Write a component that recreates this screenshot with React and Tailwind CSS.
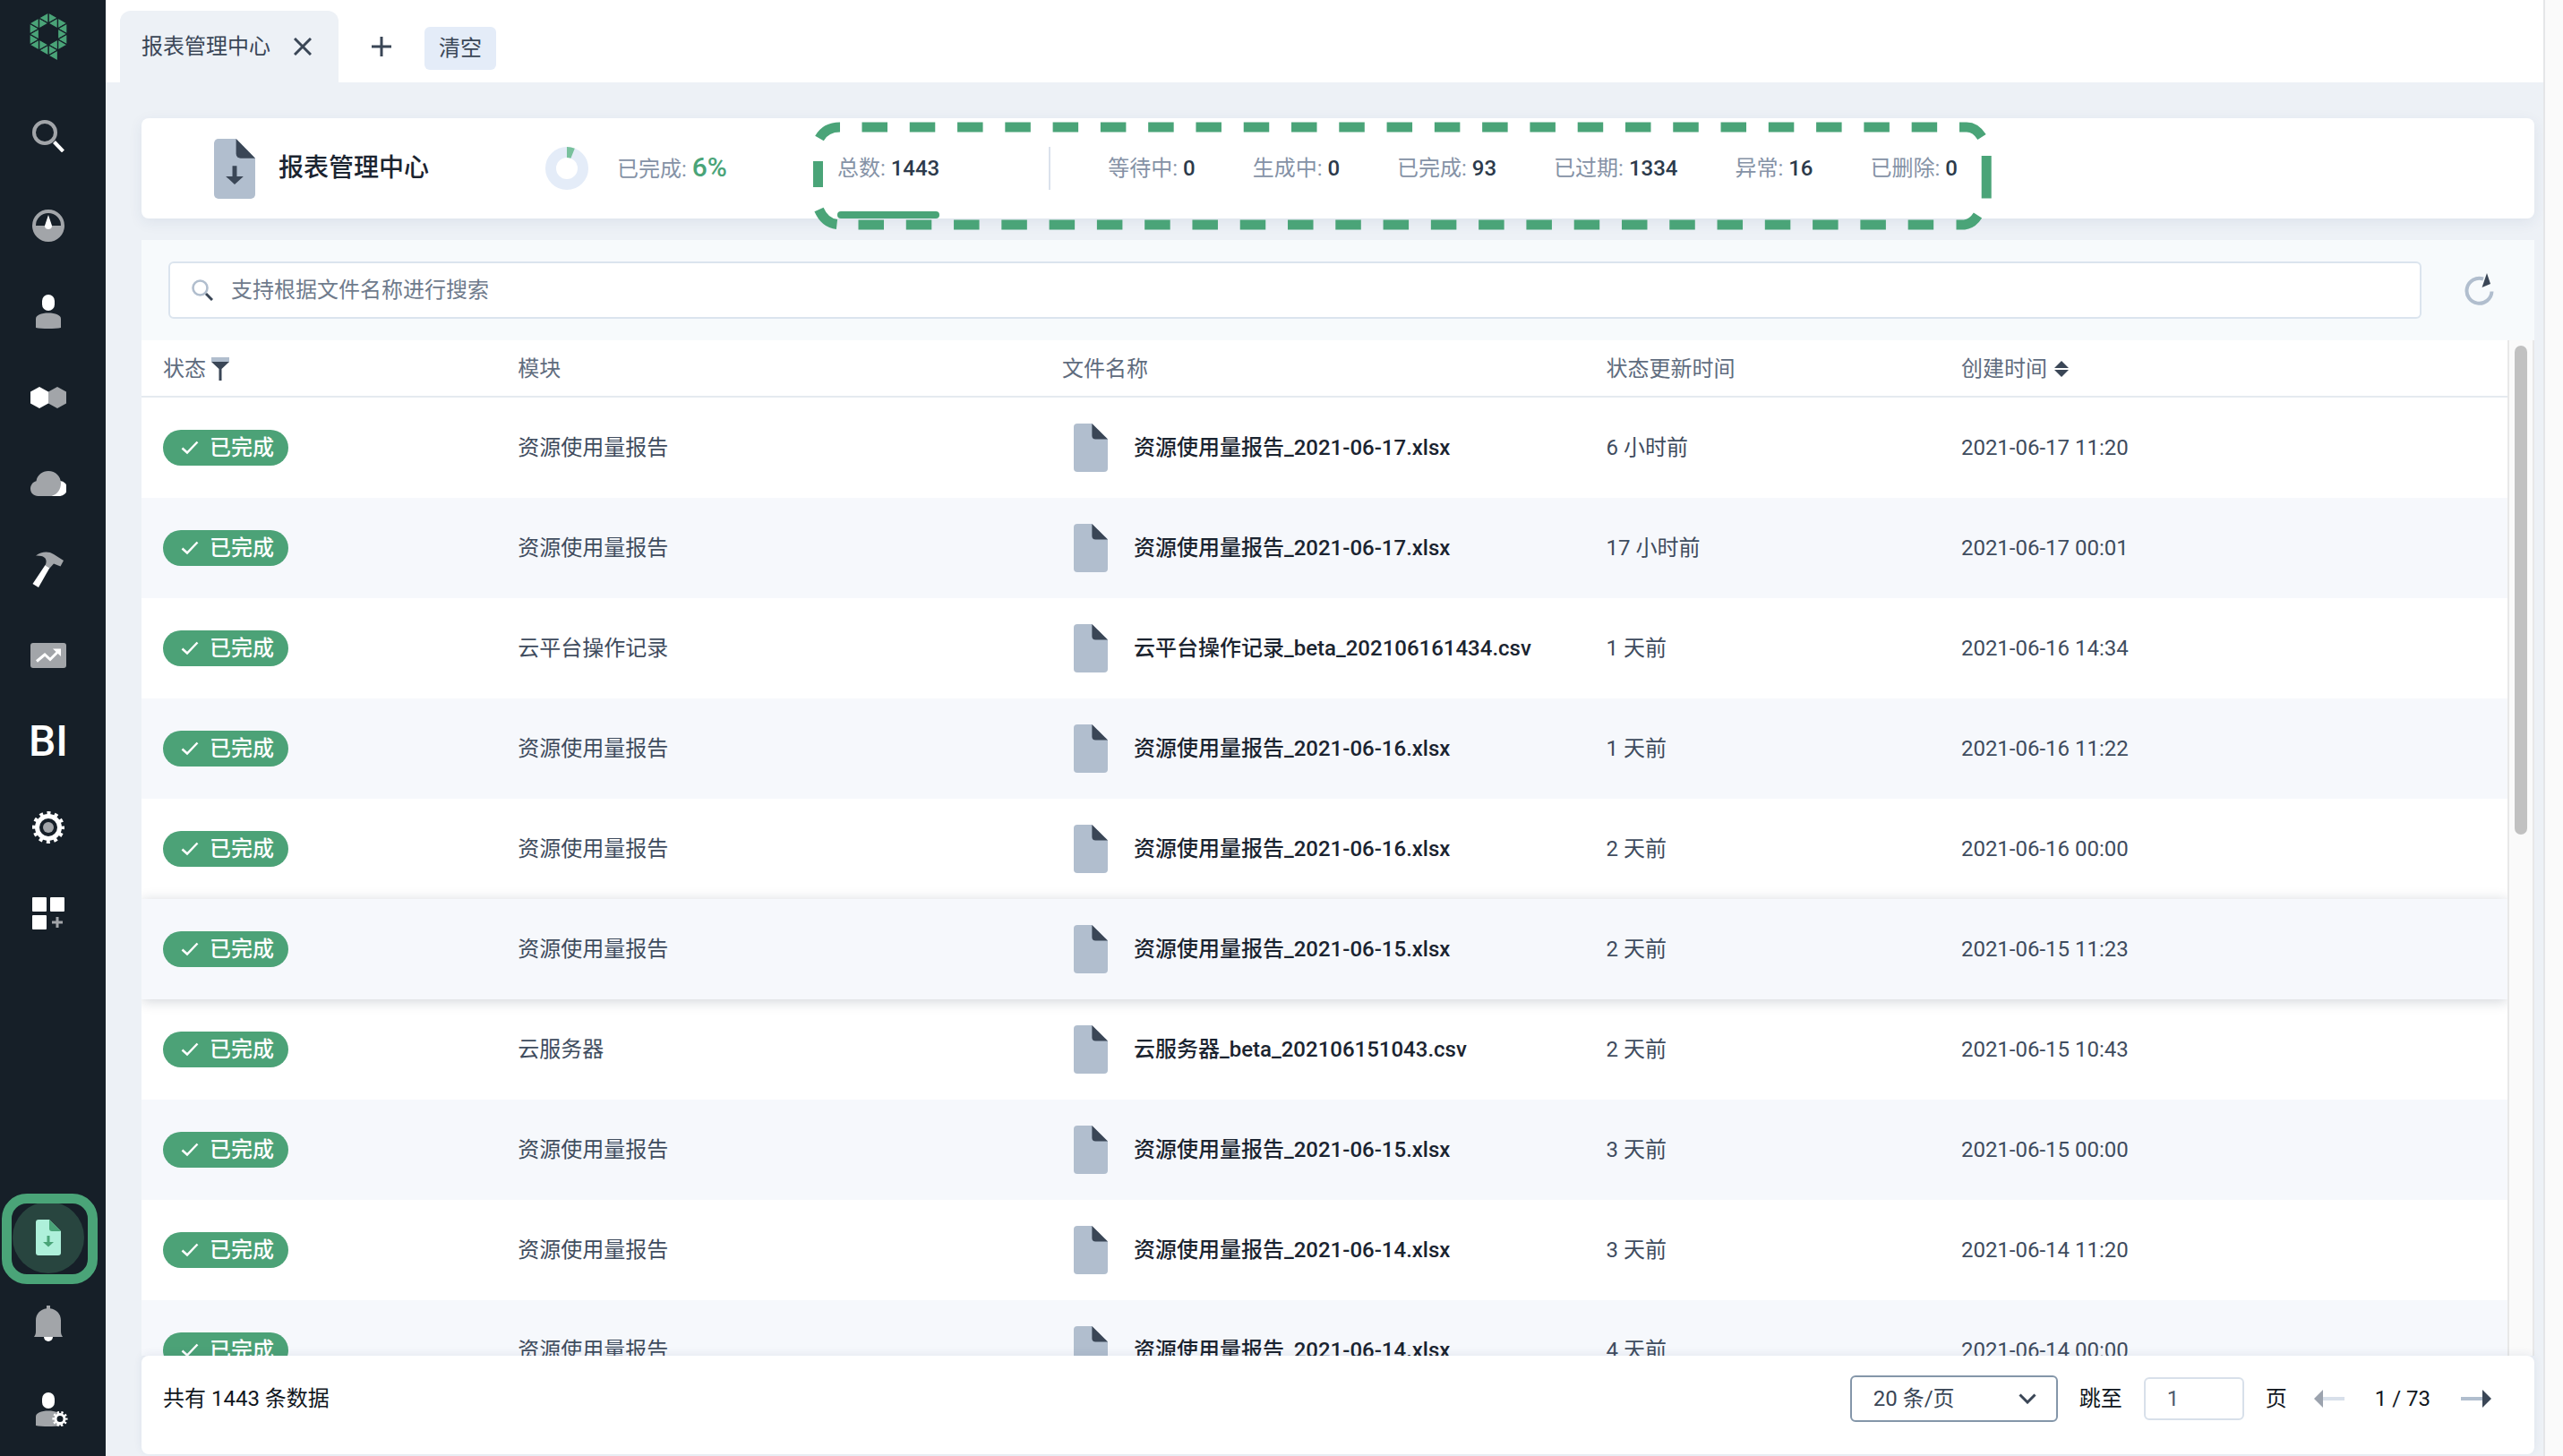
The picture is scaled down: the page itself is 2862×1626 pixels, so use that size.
const OUTER = [[21, 0], [42, 12], [42, 36], [21, 48], [0, 36], [0, 12]];
const INNER = [[21, 12], [31.5, 18], [31.5, 30], [21, 36], [10.5, 30], [10.5, 18]];

// Each side of the hexagonal ring splits into three triangles; one more forms the tail.
const LOGO_TRIANGLES = OUTER.flatMap((a, i) => {
  const b = OUTER[(i + 1) % 6];
  const mid = [(a[0] + b[0]) / 2, (a[1] + b[1]) / 2];
  const p = INNER[i];
  const q = INNER[(i + 1) % 6];
  return [[a, mid, p], [mid, p, q], [mid, b, q]];
}).concat([[[21, 48], [31.5, 42], [31.5, 54]]]);

function Logo() {
  return (
    <svg width="42" height="54" viewBox="0 0 42 54" fill="#4aa478" stroke="#161f28" strokeWidth="1.3" aria-hidden="true">
      {LOGO_TRIANGLES.map((points, i) => (
        <polygon key={i} points={points.join(" ")} />
      ))}
    </svg>
  );
}

const ICONS = {
  search: (
    <svg width="36" height="36" viewBox="0 0 36 36">
      <circle cx="14" cy="14" r="12" fill="none" stroke="#a2a5a9" strokeWidth="4" />
      <path d="M24.500 24.500l10 10.500" stroke="#fff" strokeWidth="4" />
    </svg>
  ),
  gauge: (
    <svg width="36" height="36" viewBox="0 0 36 36">
      <path d="M18 0a18 18 0 1 0 0 36a18 18 0 0 0 0-36zM4 18a14 14 0 0 1 28 0z" fill="#a2a5a9" fillRule="evenodd" />
      <path d="M18 6l4 12a4 4 0 1 1-8 0z" fill="#fff" />
    </svg>
  ),
  user: (
    <svg width="28" height="38" viewBox="0 0 28 38">
      <rect x="7" y="0" width="14" height="18" rx="7" fill="#fff" />
      <path d="M0 27c0-4 6-6.500 14-6.500s14 2.500 14 6.500v10c-6 1.300-22 1.300-28 0z" fill="#a2a5a9" />
    </svg>
  ),
  hexes: (
    <svg width="40" height="24" viewBox="0 0 40 24">
      <path d="M10 0l10 5.500v13L10 24 0 18.500v-13z" fill="#fff" />
      <path d="M30 0l10 5.500v13L30 24l-10-5.500v-13z" fill="#a2a5a9" />
    </svg>
  ),
  cloud: (
    <svg width="40" height="28" viewBox="0 0 40 28">
      <path d="M33 11a8.500 8.500 0 0 1-1 17H20z" fill="#fff" />
      <path d="M6.500 11.200C7.500 4.500 13.500 0 20 0c8 0 14 6 14 13.500 0 7-4 12.500-10.500 14.500H8.500C3.500 28 0 24.500 0 19.800c0-4 2.500-7.600 6.500-8.600z" fill="#a2a5a9" />
    </svg>
  ),
  hammer: (
    <svg width="36" height="40" viewBox="0 0 36 40">
      <path d="M14.500 15l5 3L7 40l-6.500-4z" fill="#fff" />
      <path d="M4 4.500C10 0 18-1 24 3L35 10l-3.500 6.500-7.500-3-4.500 5-5-3C17 10 16 4 4 4.500z" fill="#a2a5a9" />
    </svg>
  ),
  chart: (
    <svg width="40" height="28" viewBox="0 0 40 28">
      <rect width="40" height="28" rx="3" fill="#a2a5a9" />
      <path d="M7 20.500l9-7.500 6 5.500 8-8" fill="none" stroke="#fff" strokeWidth="3" />
      <path d="M25 6.500h9V15z" fill="#fff" />
    </svg>
  ),
  gear: (
    <svg width="36" height="36" viewBox="0 0 36 36">
      <circle cx="18" cy="18" r="12.500" fill="none" stroke="#fff" strokeWidth="5" />
      <circle cx="18" cy="18" r="16" fill="none" stroke="#fff" strokeWidth="4" strokeDasharray="4 4.378" strokeDashoffset="2" />
      <circle cx="18" cy="18" r="6" fill="#a2a5a9" />
    </svg>
  ),
  apps: (
    <svg width="36" height="36" viewBox="0 0 36 36" fill="#fff">
      <rect width="16" height="16" rx="1" />
      <rect x="20" width="16" height="16" rx="1" />
      <rect y="20" width="16" height="16" rx="1" />
      <path d="M28 22v12M22 28h12" stroke="#a2a5a9" strokeWidth="3" />
    </svg>
  ),
  bell: (
    <svg width="32" height="40" viewBox="0 0 32 40">
      <path d="M11 35h10a5 5 0 0 1-10 0z" fill="#fff" />
      <path d="M14 0h4v3.200c7 1 12 6 12 13.300V29c0 3 1 4.500 2 6H0c1-1.500 2-3 2-6V16.500C2 9.200 7 4.200 14 3.200z" fill="#a2a5a9" />
    </svg>
  ),
  userGear: (
    <svg width="36" height="38" viewBox="0 0 36 38">
      <rect x="7" y="0" width="14" height="18" rx="7" fill="#fff" />
      <path d="M0 27c0-4 6-6.500 14-6.500s14 2.500 14 6.500v10c-6 1.300-22 1.300-28 0z" fill="#a2a5a9" />
      <circle cx="27" cy="29.500" r="5" fill="#161f28" stroke="#fff" strokeWidth="3" />
      <circle cx="27" cy="29.500" r="7.300" fill="none" stroke="#fff" strokeWidth="2.500" strokeDasharray="2.300 2.286" strokeDashoffset="1.150" />
    </svg>
  ),
};

function FileIcon({ className, body = "#b1bece", fold = "#3a4656", arrow = false }) {
  return (
    <svg className={className} viewBox="0 0 28 40" preserveAspectRatio="none" aria-hidden="true">
      <path d="M3 0h12l13 13v24a3 3 0 0 1-3 3H3a3 3 0 0 1-3-3V3a3 3 0 0 1 3-3z" fill={body} />
      <path d="M15 0l13 13H18a3 3 0 0 1-3-3z" fill={fold} />
      {arrow && <path d="M12.500 18h3v7H20l-6 5.500L8 25h4.500z" fill={fold} />}
    </svg>
  );
}

function NavButton({ label, children }) {
  return (
    <button type="button" aria-label={label} className="flex h-24 w-full items-center justify-center">
      {children}
    </button>
  );
}

function Sidebar() {
  return (
    <nav aria-label="主导航" className="flex w-[118px] shrink-0 flex-col items-center bg-[#161f28] pr-[10px]">
      <a href="#home" aria-label="首页" className="mt-3.5 mb-9">
        <Logo />
      </a>
      <NavButton label="搜索">{ICONS.search}</NavButton>
      <div className="mt-1 flex w-full flex-col">
        <NavButton label="仪表盘">{ICONS.gauge}</NavButton>
        <NavButton label="用户">{ICONS.user}</NavButton>
        <NavButton label="服务">{ICONS.hexes}</NavButton>
        <NavButton label="云资源">{ICONS.cloud}</NavButton>
        <NavButton label="工具">{ICONS.hammer}</NavButton>
        <NavButton label="监控">{ICONS.chart}</NavButton>
        <NavButton label="BI">
          <span className="text-5xl leading-none font-medium text-white">BI</span>
        </NavButton>
        <NavButton label="设置">{ICONS.gear}</NavButton>
        <NavButton label="应用">{ICONS.apps}</NavButton>
      </div>
      <div className="mt-auto mb-1 flex w-full flex-col">
        <button type="button" aria-label="报表管理中心" aria-current="page" className="relative flex h-24 w-full items-center justify-center">
          <span className="flex size-20 items-center justify-center rounded-full bg-[#28453f]">
            <FileIcon className="h-10 w-7" body="#aef0da" fold="#4aa478" arrow />
          </span>
          <span className="absolute -top-px -right-px -bottom-1 left-0.5 rounded-[28px] border-[11px] border-[#4aa478]" />
        </button>
        <NavButton label="通知">{ICONS.bell}</NavButton>
        <NavButton label="账户">
          <span className="pl-2">{ICONS.userGear}</span>
        </NavButton>
      </div>
    </nav>
  );
}

function TabBar() {
  return (
    <header className="flex h-[92px] shrink-0 items-end bg-white pl-4 text-2xl text-[#3a4656]">
      <div className="flex h-20 w-[244px] items-center justify-between rounded-t-xl bg-[#edf1f6] pr-[30px] pl-6">
        <span>报表管理中心</span>
        <button type="button" aria-label="关闭">
          <svg width="20" height="20" viewBox="0 0 20 20" stroke="#3a4656" strokeWidth="3" aria-hidden="true">
            <path d="M1 1l18 18M19 1L1 19" />
          </svg>
        </button>
      </div>
      <button type="button" aria-label="新标签" className="mb-7 ml-9">
        <svg width="24" height="24" viewBox="0 0 24 24" stroke="#3a4656" strokeWidth="3" aria-hidden="true">
          <path d="M12 1v22M1 12h22" />
        </svg>
      </button>
      <button type="button" className="mb-3.5 ml-9 h-12 rounded-md bg-[#e4ecf8] px-4">
        清空
      </button>
    </header>
  );
}

function Stat({ label, value }) {
  return (
    <span className="whitespace-nowrap text-[#8592a6]">
      {label}: <b className="font-medium text-[#2c3a4b]">{value}</b>
    </span>
  );
}

function DashedFrame() {
  return (
    <svg className="pointer-events-none absolute top-1 -left-[27px] z-10" width="1316" height="122" viewBox="0 0 1316 122" fill="none" stroke="#4aa478" strokeWidth="11" aria-hidden="true">
      <path d="M54.500 6H1262" strokeDasharray="28.500 24.780" />
      <path d="M50.500 115H1257" strokeDasharray="28.500 24.780" />
      <path d="M5.500 44v29M1310.200 38v47.500" />
      <path d="M30 6Q14 6 7 18.500M1280 6h8q10 0 17 11M6.500 98Q13 113 26.500 114.500" />
      <path d="M1276.500 115h9q9-1 15-10.500" />
    </svg>
  );
}

function Summary() {
  return (
    <section className="mt-10 mr-[10px] ml-10 flex h-28 shrink-0 items-center rounded-lg bg-white pl-[81px] text-2xl shadow-[0_4px_16px_rgba(40,60,110,0.08)]">
      <FileIcon className="h-[67px] w-[46px]" arrow />
      <h1 className="ml-[26px] text-[28px] font-medium text-[#1b2430]">报表管理中心</h1>
      <svg className="ml-[130px]" width="48" height="48" viewBox="0 0 48 48" fill="none" strokeWidth="12" aria-hidden="true">
        <circle cx="24" cy="24" r="18" stroke="#e4ecf8" />
        <path d="M24 6A18 18 0 0 1 30.600 7.250" stroke="#79c19d" />
      </svg>
      <p className="ml-8 text-[#8592a6]">
        已完成: <b className="text-[30px] leading-none font-medium text-[#4aa478]">6%</b>
      </p>
      <div className="relative ml-[123px] flex h-full items-center">
        <DashedFrame />
        <div className="relative flex h-full items-center">
          <Stat label="总数" value="1443" />
          <span className="absolute inset-x-0 bottom-0 h-2 rounded bg-[#4aa478]" />
        </div>
        <span className="mr-16 ml-[122px] h-12 w-0.5 bg-[#dbe2ec]" />
        <div className="flex gap-16">
          <Stat label="等待中" value="0" />
          <Stat label="生成中" value="0" />
          <Stat label="已完成" value="93" />
          <Stat label="已过期" value="1334" />
          <Stat label="异常" value="16" />
          <Stat label="已删除" value="0" />
        </div>
      </div>
    </section>
  );
}

function SearchBar() {
  return (
    <div className="flex h-28 shrink-0 items-center bg-[#f7fafc] pr-11 pl-[30px]">
      <label className="flex h-16 flex-1 items-center rounded-md border-2 border-[#dbe4ee] bg-white pl-6">
        <svg width="24" height="24" viewBox="0 0 24 24" fill="none" aria-hidden="true">
          <circle cx="9.500" cy="9.500" r="8" stroke="#b1bece" strokeWidth="2.600" />
          <path d="M16 16l7 7" stroke="#3a4656" strokeWidth="3" />
        </svg>
        <input type="text" aria-label="搜索文件名称" placeholder="支持根据文件名称进行搜索" className="ml-5 flex-1 text-2xl outline-none placeholder:text-[#6f7b8c]" />
      </label>
      <button type="button" aria-label="刷新" className="ml-12">
        <svg width="34" height="38" viewBox="0 1 34 38" fill="none" aria-hidden="true">
          <path d="M21 7.500A14 14 0 1 0 30.500 21.500" stroke="#b1bece" strokeWidth="4" />
          <path d="M25 1l4 12-9.500 4z" fill="#3a4656" />
        </svg>
      </button>
    </div>
  );
}

const REPORT = "资源使用量报告";
const ROWS = [
  [REPORT, "资源使用量报告_2021-06-17.xlsx", "6 小时前", "2021-06-17 11:20"],
  [REPORT, "资源使用量报告_2021-06-17.xlsx", "17 小时前", "2021-06-17 00:01"],
  ["云平台操作记录", "云平台操作记录_beta_202106161434.csv", "1 天前", "2021-06-16 14:34"],
  [REPORT, "资源使用量报告_2021-06-16.xlsx", "1 天前", "2021-06-16 11:22"],
  [REPORT, "资源使用量报告_2021-06-16.xlsx", "2 天前", "2021-06-16 00:00"],
  [REPORT, "资源使用量报告_2021-06-15.xlsx", "2 天前", "2021-06-15 11:23"],
  ["云服务器", "云服务器_beta_202106151043.csv", "2 天前", "2021-06-15 10:43"],
  [REPORT, "资源使用量报告_2021-06-15.xlsx", "3 天前", "2021-06-15 00:00"],
  [REPORT, "资源使用量报告_2021-06-14.xlsx", "3 天前", "2021-06-14 11:20"],
  [REPORT, "资源使用量报告_2021-06-14.xlsx", "4 天前", "2021-06-14 00:00"],
];
const ACTIVE_ROW = 5;

function StatusPill() {
  return (
    <span className="flex h-10 w-[140px] items-center rounded-full bg-[#4ca277] pl-5 font-medium text-white">
      <svg className="mr-3" width="20" height="16" viewBox="0 0 20 16" fill="none" stroke="#fff" strokeWidth="2.500" aria-hidden="true">
        <path d="M1.500 8.500l5.500 5L18.500 1.500" />
      </svg>
      已完成
    </span>
  );
}

function ReportTable() {
  return (
    <div className="flex min-h-0 flex-1 overflow-hidden">
      <div className="min-w-0 flex-1 overflow-hidden bg-white">
        <table className="w-full table-fixed border-separate border-spacing-0 text-left text-2xl text-[#3f4c5e]">
          <colgroup>
            <col className="w-[15%]" />
            <col className="w-[23%]" />
            <col className="w-[23%]" />
            <col className="w-[15%]" />
            <col className="w-[24%]" />
          </colgroup>
          <thead>
            <tr className="h-16 text-[#5f6c7e] [&>th]:border-b-2 [&>th]:border-[#e5eaf0] [&>th]:px-6 [&>th]:pt-0.5 [&>th]:pb-0 [&>th]:font-normal">
              <th>
                <span className="flex items-center gap-1.5">
                  状态
                  <button type="button" aria-label="筛选状态">
                    <svg width="20" height="26" viewBox="0 0 20 26" aria-hidden="true">
                      <path d="M0 0h20v5H0z" fill="#b1bece" />
                      <path d="M0 5h20l-8.500 8v13h-3V13z" fill="#3a4656" />
                    </svg>
                  </button>
                </span>
              </th>
              <th>模块</th>
              <th>文件名称</th>
              <th>状态更新时间</th>
              <th>
                <span className="flex items-center gap-2">
                  创建时间
                  <button type="button" aria-label="按创建时间排序">
                    <svg width="16" height="18" viewBox="0 0 16 18" fill="#3a4656" aria-hidden="true">
                      <path d="M8 0l8 8H0zM8 18l8-8H0z" />
                    </svg>
                  </button>
                </span>
              </th>
            </tr>
          </thead>
          <tbody>
            {ROWS.map(([module, file, updated, created], i) => (
              <tr
                key={i}
                className={
                  "h-28 [&>td]:px-6 [&>td]:py-0 [&>td]:whitespace-nowrap " +
                  (i % 2 ? "bg-[#f6f8fc] " : "bg-white ") +
                  (i === ACTIVE_ROW ? "relative z-10 shadow-[0_2px_14px_rgba(20,35,60,0.2)]" : "")
                }
              >
                <td>
                  <StatusPill />
                </td>
                <td>{module}</td>
                <td>
                  <a href="#download" className="flex items-center pl-[13px] font-medium text-[#1b2430]">
                    <FileIcon className="mr-[29px] h-[54px] w-[38px] shrink-0" />
                    {file}
                  </a>
                </td>
                <td>{updated}</td>
                <td>{created}</td>
              </tr>
            ))}
          </tbody>
        </table>
      </div>
      <div className="w-[30px] shrink-0 border-x-2 border-[#e8e8e8] bg-[#fafafa] px-1.5 pt-1.5">
        <div className="h-[546px] rounded-full bg-[#c1c1c1]" />
      </div>
    </div>
  );
}

function Pagination() {
  return (
    <footer className="relative z-10 mb-0.5 flex h-[110px] shrink-0 items-start rounded-lg bg-white pt-[22px] pr-12 pl-6 text-2xl text-[#10161d] shadow-[0_-2px_10px_rgba(40,60,110,0.08)]">
      <p className="flex h-[52px] items-center">共有 1443 条数据</p>
      <div className="ml-auto flex h-[52px] items-center">
        <div className="relative flex items-center">
          <select aria-label="每页条数" className="h-[52px] w-[232px] appearance-none rounded-md border-2 border-[#8496a9] bg-white pl-6 text-[#3a4656]">
            <option>20 条/页</option>
          </select>
          <svg className="pointer-events-none absolute right-6" width="20" height="12" viewBox="0 0 20 12" fill="none" stroke="#3a4656" strokeWidth="3" aria-hidden="true">
            <path d="M1.500 1.500L10 10l8.500-8.500" />
          </svg>
        </div>
        <label htmlFor="jump" className="ml-6">跳至</label>
        <input id="jump" type="text" defaultValue="1" className="mx-6 h-12 w-28 rounded-md border-2 border-[#d8e0ea] bg-white pl-6 text-[#4f5c6e]" />
        <span>页</span>
        <button type="button" aria-label="上一页" className="ml-[30px]">
          <svg width="34" height="20" viewBox="0 0 34 20" aria-hidden="true">
            <path d="M10 8h24v4H10z" fill="#d8e0ea" />
            <path d="M10 0v20L0 10z" fill="#9ca3ae" />
          </svg>
        </button>
        <span className="mx-[34px]">1 / 73</span>
        <button type="button" aria-label="下一页">
          <svg width="34" height="20" viewBox="0 0 34 20" aria-hidden="true">
            <path d="M0 8h24v4H0z" fill="#b1bece" />
            <path d="M24 0v20l10-10z" fill="#3a4656" />
          </svg>
        </button>
      </div>
    </footer>
  );
}

export default function App() {
  return (
    <div className='flex h-screen overflow-hidden bg-[#edf1f6] font-[Roboto,"Noto_Sans_CJK_SC",sans-serif]'>
      <Sidebar />
      <main className="flex min-w-0 flex-1 flex-col">
        <TabBar />
        <Summary />
        <section className="mt-6 mr-[10px] ml-10 flex min-h-0 flex-1 flex-col">
          <SearchBar />
          <ReportTable />
          <Pagination />
        </section>
      </main>
      <div className="w-[22px] shrink-0 border-l-2 border-[#e5e6e8] bg-[#fafafa]" />
    </div>
  );
}
